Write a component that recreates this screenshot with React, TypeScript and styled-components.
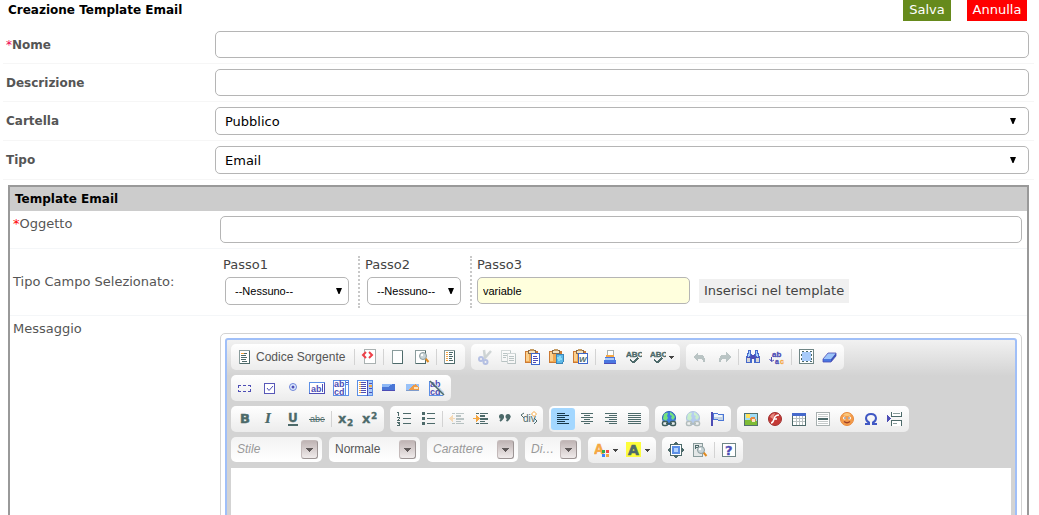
import React from "react";
import styled, { createGlobalStyle, css } from "styled-components";

const GlobalStyle = createGlobalStyle`
  *, *::before, *::after { box-sizing: border-box; }
  body { margin: 0; background: #fff; }
  button, input, select, textarea { margin: 0; font-family: inherit; }
`;

const ui = '"DejaVu Sans", Verdana, sans-serif';
const arial = '"Liberation Sans", Arial, sans-serif';

const Page = styled.main`
  height: 100vh;
  overflow: auto;
  scrollbar-width: none;
  font: 13px/16px ${ui};
  color: #555;
`;

const Form = styled.form`
  padding: 0 5px 0 3px;
`;

const Header = styled.header`
  display: flex;
  align-items: flex-start;
  justify-content: space-between;
  height: 26px;
  padding: 0 7px 0 5px;
`;

const Title = styled.h1`
  margin: 0;
  font: bold 12px/20px ${ui};
  color: #000;
`;

const Actions = styled.div`
  display: flex;
  gap: 16px;
`;

const ActionButton = styled.button<{ $color: string; $width: number }>`
  width: ${(p) => p.$width}px;
  height: 21px;
  padding: 0 0 2px;
  border: 0;
  background: ${(p) => p.$color};
  color: #fff;
  font: 13px/18px ${ui};
`;

const Row = styled.div`
  display: grid;
  grid-template-columns: 209px 1fr;
  align-items: center;
  padding: 5px 5px 5px 3px;
  border-bottom: 1px solid #f6f6f6;
`;

const RowLabel = styled.label`
  font: bold 12px/16px ${ui};
  color: #555;
`;

const Required = styled.span`
  font-weight: normal;
  color: #f00050;
`;

const controlShape = css`
  border: 1px solid #b5b5b5;
  border-radius: 5px;
  background: #fff;
  color: #000;
`;

const TextInput = styled.input<{ $small?: boolean }>`
  ${controlShape}
  display: block;
  width: 100%;
  height: 27px;
  padding: 0 5px;
  outline: 0;
  font: ${(p) => (p.$small ? `11px ${arial}` : `13px ${ui}`)};
  ${(p) => p.$small && "background: #ffffdd;"}
`;

const SelectWrap = styled.div<{ $small?: boolean }>`
  position: relative;
  svg {
    position: absolute;
    top: 11px;
    right: ${(p) => (p.$small ? 7 : 13)}px;
    pointer-events: none;
  }
`;

const SelectBox = styled.select<{ $small?: boolean }>`
  ${controlShape}
  display: block;
  appearance: none;
  width: 100%;
  height: 28px;
  padding: 0 9px;
  font: ${(p) => (p.$small ? `11px ${arial}` : `13px ${ui}`)};
`;

const Panel = styled.section`
  margin: 5px 5px 0;
  border: 2px solid #999;
`;

const PanelTitle = styled.h2`
  margin: 0;
  padding: 0 5px;
  background: #ccc;
  font: bold 12px/24px ${ui};
  color: #000;
`;

const PanelRow = styled.div<{ $top?: boolean }>`
  display: grid;
  grid-template-columns: 207px minmax(0, 1fr);
  align-items: ${(p) => (p.$top ? "start" : "center")};
  padding: 5px 5px 5px 3px;
  border-bottom: 1px solid #f4f6f8;
`;

const PanelLabel = styled.label`
  font: 13px/16px ${ui};
  color: #555;
`;

const RequiredRed = styled(Required)`
  color: #f00;
`;

const Steps = styled.div`
  display: flex;
  height: 56px;
  padding: 2px 0;
`;

const Step = styled.div<{ $pad: number; $width: number }>`
  width: ${(p) => p.$width}px;
  padding: 0 9px 0 ${(p) => p.$pad}px;
  & + & { border-left: 2px dotted #c8c8c8; }
`;

const StepTitle = styled.label<{ $flush?: boolean }>`
  display: block;
  height: 21px;
  margin-left: ${(p) => (p.$flush ? 0 : -2)}px;
  font: 13px/18px ${ui};
  color: #444;
`;

const Insert = styled.button`
  align-self: flex-start;
  height: 24px;
  margin-top: 23px;
  padding: 0 5px;
  border: 0;
  background: #f0f0f0;
  color: #444;
  font: 13px/24px ${ui};
`;

/* Editor */

const EditorShell = styled.div`
  margin-top: 12px;
  padding: 4px;
  border: 1px solid #d3d3d3;
  border-radius: 5px;
`;

const EditorFrame = styled.div`
  padding: 4px;
  border: 2px solid #a0bff8;
  border-radius: 3px;
  background: #d3d3d3 linear-gradient(#f1f1f1, #d3d3d3) no-repeat 0 0 / 100% 36px;
`;

const Tools = styled.div`
  display: flex;
  flex-direction: column;
  gap: 5px;
`;

const ToolRow = styled.div`
  display: flex;
  flex-wrap: wrap;
  gap: 6px;
`;

const Group = styled.div`
  display: flex;
  height: 26px;
  padding: 2px;
  border-radius: 5px;
  background: linear-gradient(#fff, #ececec);
`;

const ToolButton = styled.button<{ $active?: boolean; $faded?: boolean; $source?: boolean }>`
  display: flex;
  align-items: center;
  min-width: ${(p) => (p.$source ? 119 : 24)}px;
  height: 22px;
  padding: 0 4px;
  border: 0;
  border-radius: 3px;
  background: ${(p) => (p.$active ? "#a3d7ff" : "transparent")};
  color: #555;
  font: 12px/22px ${arial};
  svg { flex: none; opacity: ${(p) => (p.$faded ? 0.35 : 1)}; }
`;

const ToolText = styled.span`
  padding-left: 3px;
`;

const Separator = styled.span`
  width: 1px;
  height: 16px;
  margin: 3px 2px;
  background: #d3d3d3;
`;

const Combos = styled.div`
  display: flex;
  gap: 7px;
  margin-right: 1px;
`;

const Combo = styled.button<{ $width: number; $plain?: boolean }>`
  display: flex;
  align-items: center;
  justify-content: space-between;
  width: ${(p) => p.$width}px;
  height: 25px;
  padding: 0 4px 0 6px;
  border: 0;
  border-radius: 5px;
  background: linear-gradient(#f3f3f3, #fff);
  color: ${(p) => (p.$plain ? "#555" : "#999")};
  font: ${(p) => (p.$plain ? "normal" : "italic")} 12px/25px ${arial};
`;

const ComboArrow = styled.span`
  display: flex;
  align-items: center;
  justify-content: center;
  width: 17px;
  height: 19px;
  border: 1px solid #c4baba;
  border-right-color: #9c9494;
  border-bottom-color: #9c9494;
  border-radius: 3px;
  background: linear-gradient(#bfb4b4, #f0ebeb);
`;

const Writing = styled.textarea`
  display: block;
  width: 100%;
  height: 200px;
  margin-top: 5px;
  padding: 8px;
  border: 0;
  outline: 0;
  resize: none;
  background: #fff;
`;

/* Drawings, each on a 16 by 16 grid */

const T = "#4d6a6a";
const B = "#4d4db5";
const O = "#f5a742";

const Svg = ({ children }: { children: React.ReactNode }) => (
  <svg width="16" height="16" viewBox="0 0 16 16" fill="none" shapeRendering="crispEdges" aria-hidden="true">
    {children}
  </svg>
);

const Lines = ({ d, c = T, w = 1 }: { d: string; c?: string; w?: number }) => <path d={d} stroke={c} strokeWidth={w} />;
const Fill = ({ d, c = T }: { d: string; c?: string }) => <path d={d} fill={c} />;

const Letter = ({ x, y, size, c = T, font = "DejaVu Sans", italic, weight = "bold", edge = 0, children }: {
  x: number; y: number; size: number; c?: string; font?: string; italic?: boolean; weight?: string; edge?: number; children: React.ReactNode;
}) => (
  <text x={x} y={y} fontSize={size} fill={c} stroke={edge ? c : "none"} strokeWidth={edge} fontFamily={font} fontWeight={weight} fontStyle={italic ? "italic" : "normal"}>
    {children}
  </text>
);

const TwoLines = () => (
  <Letter x={1} y={7} size={9} c={B} font="Liberation Sans">
    ab<tspan x="1" y="15">cd</tspan>
  </Letter>
);

const Sheet = ({ x = 2, y = 1, w = 11, h = 14 }: { x?: number; y?: number; w?: number; h?: number }) => (
  <>
    <rect x={x + 0.5} y={y + 0.5} width={w - 1} height={h - 1} fill="#fff" stroke="#8a9c9c" />
    <Lines d={`M${x + w - 0.5} ${y + 1}V${y + h}M${x + 1} ${y + h - 0.5}H${x + w}`} />
  </>
);

const Clipboard = () => (
  <>
    <rect x="0" y="2" width="13" height="12" rx="1" fill="#cc7a33" />
    <rect x="1" y="3" width="8" height="10" fill="#f0a850" />
    <rect x="1" y="3" width="3" height="9" fill="#fbd08e" />
    <rect x="3" y="1" width="8" height="4" fill="#8a6a48" />
    <rect x="4" y="2" width="6" height="2" fill="#f3e3c0" />
    <rect x="5" y="0" width="4" height="2" fill="#c49a61" />
  </>
);

const Lens = ({ x, y }: { x: number; y: number }) => (
  <g shapeRendering="auto">
    <path d={`M${x + 2.5} ${y + 2.5}L${x + 5.5} ${y + 6}`} stroke="#e08a20" strokeWidth="2" />
    <circle cx={x} cy={y} r="3.5" fill="#c7d3d6" stroke="#8b9c9e" />
    <circle cx={x - 1} cy={y - 1} r="1.2" fill="#fff" />
  </g>
);

const Globe = () => (
  <g shapeRendering="auto">
    <circle cx="8" cy="7" r="6.5" fill="#3f7fe0" stroke="#2d62b0" />
    <path d="M3 3Q6 1 7 2L6 5L7 7L5 10L2 8ZM9 1Q13 3 14 6L12 9L10 7L11 5L9 4Z" fill="#74e27c" />
    <rect x="1.5" y="10.5" width="5" height="4" rx="1.5" fill="#e8eeee" stroke="#3e5c5c" strokeWidth="1.5" />
    <rect x="9.5" y="10.5" width="5" height="4" rx="1.5" fill="#e8eeee" stroke="#3e5c5c" strokeWidth="1.5" />
    <path d="M5 12.5H11" stroke="#3e5c5c" strokeWidth="1.5" />
  </g>
);

const spellParts = (
  <>
    <g shapeRendering="auto"><Letter x={0} y={8} size={8} edge={0.4} font="Liberation Sans">ABC</Letter></g>
    <path d="M4 10.500L7.500 13.500L12 9" stroke={T} strokeWidth="1.500" />
  </>
);

const undoParts = <Fill d="M1 8L6 3V6H10Q13 7 13 13H11Q11 10 9 10H6V13Z" />;

const icons: Record<string, React.ReactNode> = {
  source: <><Sheet /><Lines d="M4 6.500H9M4 8.500H10M4 10.500H9M5 12.500H10" /><Lines d="M4 4.500H7" c={O} /><Lines d="M7 4.500H10" /></>,
  tags: <><rect x="3.500" y="0.500" width="11" height="14" fill="#fff" stroke="#a9b1b1" /><path d="M5 3L2 6L5 9M8 3L11 6L8 9" stroke="#ee4048" strokeWidth="2" shapeRendering="auto" /></>,
  blank: <Sheet />,
  preview: <><Sheet x={1} /><Lens x={9} y={7} /></>,
  templates: <><Sheet x={1} /><Lines d="M3 3.500H5M3 5.500H5M3 7.500H5M3 9.500H5M3 11.500H5" c={O} /><Lines d="M6 3.500H10M6 5.500H9M6 7.500H10M6 9.500H9M6 11.500H10" /></>,
  cut: <g shapeRendering="auto"><path d="M7 1L8 9M14 2L7 10" stroke="#839494" strokeWidth="2.500" /><circle cx="4" cy="10" r="2" stroke="#4464c8" strokeWidth="2" /><circle cx="8.500" cy="13" r="2" stroke="#4464c8" strokeWidth="2" /></g>,
  copy: <><Sheet x={0} y={1} w={10} h={12} /><Lines d="M2 4.500H7M2 6.500H7M2 8.500H5" /><Sheet x={6} y={4} w={9} h={11} /><Lines d="M8 7.500H13M8 9.500H13M8 11.500H13" /></>,
  paste: <><Clipboard /><rect x="6.500" y="4.500" width="8" height="11" fill="#fff" stroke="#3e68cc" /><Lines d="M8 7.500H12M8 9.500H13M8 11.500H13M8 13.500H11" c={B} /></>,
  pasteText: <><Clipboard /><path d="M7 6L14 5L15 11L13 15L7 14Z" fill="#5eb9e8" stroke="#3b87b8" /><path d="M8 8L12 7L13 11L9 12Z" fill="#8bdcf5" /></>,
  pasteWord: <><Clipboard /><rect x="5.500" y="4.500" width="9" height="10" fill="#fff" stroke="#3e68cc" /><g shapeRendering="auto"><Letter x={6} y={13} size={8} italic font="Liberation Sans">W</Letter></g></>,
  print: <><rect x="5" y="1" width="6" height="6" fill="#fff" stroke="#a9b1b1" /><rect x="4" y="6" width="8" height="3" fill={O} /><path d="M3 8H13L14 14H2Z" fill="#4a76e0" /><path d="M3 9H12V11H3Z" fill="#a9cbfa" /><Lines d="M2 14.500H14" c={B} /></>,
  spell: spellParts,
  undo: undoParts,
  redo: <g transform="matrix(-1 0 0 1 16 0)">{undoParts}</g>,
  find: <><Fill d="M3 1h3v4h1v9h-6v-7h1v-3h1zM10 1h3v3h1v3h1v7h-6v-9h1z" c="#4669cb" /><Fill d="M4 2h1v5h-1zM11 2h1v5h-1zM3 5h1v3h-1zM12 5h1v3h-1z" c="#a6d0ff" /><Fill d="M2 9h3v4h-3zM11 9h3v4h-3z" c="#d5d5d5" /><Fill d="M6 6h4v4h-4z" c={B} /><Lines d="M2 8.500H14" c={B} /></>,
  replace: (
    <g shapeRendering="auto">
      <Letter x={3} y={8} size={8} c={B} edge={0.3} font="Liberation Sans">ab</Letter>
      <Letter x={6} y={15} size={7} c={B} edge={0.3} font="Liberation Sans">a</Letter>
      <Letter x={11} y={15} size={7} c={O} edge={0.3} font="Liberation Sans">c</Letter>
      <path d="M2.500 8V12M0.500 10L2.500 12.500L5 11" stroke={B} />
    </g>
  ),
  selectAll: <><rect x="1.500" y="0.500" width="14" height="14" fill="#fff" stroke="#6f8585" /><rect x="4" y="3" width="9" height="9" fill="#a9cbfa" /><rect x="3.500" y="2.500" width="10" height="10" stroke={T} strokeDasharray="2 2" /></>,
  eraser: <g shapeRendering="auto"><path d="M1 10L6 4H14L9 10Z" fill="#9cc4fa" /><path d="M1 10H9V13H1Z" fill="#4a76e0" /><path d="M9 10L14 4V7L9 13Z" fill="#3653b8" /><path d="M1 10L6 4H14V7L9 13H1Z" stroke={B} strokeWidth=".8" /></g>,
  form: <><Lines d="M1 5.500H4M6 5.500H9M11 5.500H14M1 11.500H4M6 11.500H9M11 11.500H14" c={B} /><Lines d="M1.500 5V8M1.500 10V12M13.500 5V7M13.500 9V12" c={B} /></>,
  checkbox: <><rect x="3.500" y="3.500" width="10" height="10" fill="#fff" stroke="#5858b8" /><path d="M6 8L8 10.500L12 6" stroke={B} shapeRendering="auto" /></>,
  radio: <g shapeRendering="auto"><circle cx="8" cy="7" r="3.500" fill="#dfecff" stroke="#6f85d8" /><circle cx="8" cy="7" r="1.500" fill={B} /></g>,
  textField: <><rect x="0.500" y="2.500" width="15" height="11" fill="#fff" stroke="#5c8fe6" /><Lines d="M0 13.500H16M15.500 3V14" c={B} /><g shapeRendering="auto"><Letter x={2} y={12} size={9} c={B} font="Liberation Sans">ab</Letter></g><Lines d="M13.500 4V12" c={B} /></>,
  textArea: <><rect x="0.500" y="0.500" width="15" height="15" fill="#fff" stroke="#5c8fe6" /><g shapeRendering="auto"><TwoLines /></g><Lines d="M12.500 0V16M13 4.500H16" c="#5c8fe6" /><Fill d="M13 2h2v1h-2z" c={B} /></>,
  selectField: <><rect x="0.500" y="0.500" width="15" height="15" fill="#fff" stroke="#5c8fe6" /><Lines d="M2 2.500H4M2 4.500H4M2 6.500H4M2 8.500H4M2 10.500H4M2 12.500H4" c={O} /><Lines d="M4 2.500H9M4 4.500H9M4 6.500H9M4 8.500H9M4 10.500H9M4 12.500H9" c={B} /><rect x="11" y="1" width="4" height="14" fill="#a9cbfa" /><Lines d="M10.500 0V16M12 3.500H15M12 8.500H15M12 12.500H15" c={B} /><Fill d="M12 5h3v2h-3z" c={O} /></>,
  button: <><rect x="1" y="4" width="13" height="7" fill="#4a76d6" /><path d="M1 4H12L7 7H1Z" fill="#8cb7f5" /><Lines d="M1 10.500H14" c={B} /></>,
  imageButton: <><rect x="1" y="4" width="13" height="7" fill="#9ac2f7" /><path d="M4 9L8 5L11 4L14 8V11H4Z" fill="#ef9a46" /><path d="M9 7H13V9H9Z" fill="#fce4bc" /><Lines d="M1 10.500H14" c="#7f9ccc" /></>,
  hidden: <><g shapeRendering="auto"><TwoLines /><path d="M3 1L15 12V15Z" fill="#bfd6ee" /></g><Lines d="M0.500 1V15M0 15.500H14" c="#5c8fe6" /><path d="M1 1L15 15" stroke={T} strokeWidth="1.500" shapeRendering="auto" /></>,
  bold: <g shapeRendering="auto"><Letter x={3} y={12} size={13} edge={0.5}>B</Letter></g>,
  italic: <g shapeRendering="auto"><Letter x={4} y={12} size={13} italic font="DejaVu Serif">I</Letter></g>,
  underline: <><g shapeRendering="auto"><Letter x={3} y={11} size={12} edge={0.3}>U</Letter></g><Lines d="M3 14H13" w={2} /></>,
  strike: <><g shapeRendering="auto"><Letter x={1} y={11} size={9} weight="normal" font="Liberation Sans">abc</Letter></g><Lines d="M0 8.500H16" /></>,
  sub: <g shapeRendering="auto"><Letter x={0} y={12} size={13} edge={0.3}>x<tspan x="9" y="15" fontSize="9">2</tspan></Letter></g>,
  sup: <g shapeRendering="auto"><Letter x={0} y={12} size={13} edge={0.3}>x<tspan x="9" y="8" fontSize="9">2</tspan></Letter></g>,
  numbered: <Lines d="M7 2.500H15M7 7.500H15M7 12.500H15M1 1.500H3M2.500 1V5M1 6.500H4M3 7.500H4M2 8.500H3M1 9.500H4M1 11.500H4M3.500 11V15M2 12.500H4M1 14.500H4" />,
  bullets: <><Lines d="M7 2.500H15M7 7.500H15M7 12.500H15" /><Fill d="M2 1h3v3h-3zM2 6h3v3h-3zM2 11h3v3h-3z" /></>,
  outdent: <><Lines d="M3 2.500H6M7 2.500H15M7 10.500H12M3 12.500H6M7 12.500H15" /><Lines d="M7 5H12M7 8H15" w={2} /><Fill d="M0 7h1v-1h1v-1h1v-1h1v3h2v1h-2v3h-1v-1h-1v-1h-1v-1h-1z" c={O} /></>,
  indent: <><Lines d="M3 2.500H6M7 2.500H15M7 10.500H12M3 12.500H6M7 12.500H15" /><Lines d="M7 5H12M7 8H15" w={2} /><Fill d="M0 7h3v-3h1v1h1v1h1v1h1v1h-1v1h-1v1h-1v1h-1v-3h-3z" c={O} /></>,
  quote: <g shapeRendering="auto"><path d="M3 10Q6 8 6 5" stroke={T} strokeWidth="2" /><circle cx="4.500" cy="5.500" r="2.500" fill={T} /><path d="M9.500 10Q12.500 8 12.500 5" stroke={T} strokeWidth="2" /><circle cx="11" cy="5.500" r="2.500" fill={T} /></g>,
  div: <g shapeRendering="auto"><Letter x={2} y={11} size={10} weight="normal" font="Liberation Sans">div</Letter><path d="M3 2L0 4L3 7M13 7L16 10L13 13" stroke={T} /><path d="M13 0.500L15.500 3L13 5.500L10.500 3Z" fill="#fff" stroke={O} /></g>,
  left: <Lines c="#16384a" d="M2 2.500H10M2 4.500H14M2 6.500H10M2 8.500H14M2 10.500H10M2 12.500H14" />,
  center: <Lines d="M2 2.500H14M5 4.500H11M2 6.500H14M5 8.500H11M2 10.500H14M5 12.500H11" />,
  right: <Lines d="M2 2.500H14M6 4.500H14M2 6.500H14M6 8.500H14M2 10.500H14M6 12.500H14" />,
  justify: <Lines d="M1 2.500H14M1 4.500H14M1 6.500H14M1 8.500H14M1 10.500H14M1 12.500H14" />,
  link: <Globe />,
  unlink: <Globe />,
  anchor: <><Lines d="M3 1V15" c={B} w={2} /><path d="M4 2H8L9 3H14V9H9L8 8H4Z" fill="#c3d3e4" stroke="#4a76d6" /><Fill d="M5 3h4v1h4v2h-8z" c="#edf4fb" /></>,
  image: <><rect x="1.500" y="2.500" width="13" height="12" fill="#9fdcf7" stroke="#52706c" /><path d="M2 9H8L14 10V14H2Z" fill="#7ebc36" /><circle cx="5" cy="5" r="2.500" fill="#ffe35a" /><path d="M7 9L8 6H12L13 10H8Z" fill="#e88a45" /><rect x="9" y="8" width="3" height="3" fill="#fce8c8" /></>,
  flash: <g shapeRendering="auto"><circle cx="8" cy="8" r="6.500" fill="#c53a36" stroke="#9f302f" /><path d="M3 6Q4 3 8 2L6 8Z" fill="#e88980" /><path d="M12 4Q8 4 7 8Q6 12 4 12M7 8H10" stroke="#fff" strokeWidth="1.500" /></g>,
  table: <><rect x="1.500" y="2.500" width="13" height="12" fill="#fff" stroke={T} /><Fill d="M1 2h14v3h-14z" c="#4669cb" /><Lines d="M2 7.500H14M2 10.500H14M5.500 5V14M8.500 5V14M11.500 5V14" c="#b9c1c1" /></>,
  rule: <><rect x="1.500" y="1.500" width="13" height="13" fill="#fff" stroke="#a9b1b1" /><Lines d="M3 3.500H13M3 5.500H13M3 10.500H13M3 12.500H13" c="#c5caca" /><Fill d="M3 7h10v2h-10z" /></>,
  smiley: <g shapeRendering="auto"><circle cx="8" cy="8" r="6.500" fill="#f49c4b" stroke="#e88a3c" /><path d="M4 4Q8 0 12 4Q8 6 4 4" fill="#fac77c" /><circle cx="5.500" cy="7" r="1.500" fill="#fff" /><circle cx="10.500" cy="7" r="1.500" fill="#fff" /><circle cx="6" cy="7" r=".7" fill="#334" /><circle cx="10" cy="7" r=".7" fill="#334" /><path d="M5 10.500Q8 13 11 10.500" stroke="#9e4128" strokeWidth="1.500" /></g>,
  omega: <g shapeRendering="auto"><path d="M2 13H6V11.500Q3 10 3 7Q3.500 3 8 3Q12.500 3 13 7Q13 10 10 11.500V13H14" stroke="#4058c4" strokeWidth="2" /></g>,
  pageBreak: <><Fill d="M0 4h1v1h1v1h1v1h1v1h-1v1h-1v1h-1v1h-1z" c={B} /><path d="M4.500 1V5.500H14.500V1M4.500 15V9.500H14.500V15" fill="#fff" stroke={T} /><Lines d="M6 2.500H13M6 12.500H10" c="#8a9c9c" /></>,
  textColor: <><g shapeRendering="auto"><Letter x={0} y={12} size={14} c={O} edge={0.6} font="Liberation Sans">A</Letter></g><Fill d="M8 8h3v3h-3z" c="#35ad4b" /><Fill d="M12 8h3v3h-3z" c="#f04a4d" /><Fill d="M8 12h3v3h-3z" c="#3d83ff" /><Fill d="M12 12h3v3h-3z" c={O} /></>,
  background: <><rect x="0" y="0" width="15" height="15" fill="#fdfd3c" /><g shapeRendering="auto"><Letter x={2} y={13} size={14} edge={0.6}>A</Letter></g></>,
  maximize: <><rect x="2.500" y="2.500" width="11" height="11" fill="#fff" stroke={T} /><rect x="4" y="4" width="8" height="8" fill="#5c8fe6" /><rect x="6" y="6" width="4" height="4" fill="#b2d3ff" /><Fill d="M7 0h2v1h1v1h-4v-1h1zM7 16h2v-1h1v-1h-4v1h1zM0 7h1v-1h1v4h-1v-1h-1zM16 7h-1v-1h-1v4h1v-1h1z" /></>,
  blocks: <><rect x="1.500" y="1.500" width="9" height="13" fill="#e3e7e7" stroke="#8a9c9c" /><Lines d="M3 3.500H6M3.500 3V7M6.500 3V7M3 5.500H7" /><Lens x={9} y={8} /></>,
  about: <><rect x="1.500" y="1.500" width="13" height="13" fill="#fff" stroke="#6f8585" /><g shapeRendering="auto"><Letter x={4} y={13} size={13} c={B} edge={0.3}>?</Letter></g></>,
};

const Arrow = () => (
  <svg width="5" height="3" viewBox="0 0 5 3" fill="#444" shapeRendering="crispEdges" aria-hidden="true">
    <path d="M0 0H5V1H4V2H3V3H2V2H1V1H0Z" />
  </svg>
);

const WideArrow = () => (
  <svg width="7" height="4" viewBox="0 0 7 4" fill="#5e5858" shapeRendering="crispEdges" aria-hidden="true">
    <path d="M0 0H7V1H6V2H5V3H4V4H3V3H2V2H1V1H0Z" />
  </svg>
);

const SelectArrow = () => (
  <svg width="6" height="6" viewBox="0 0 6 6" fill="#000" aria-hidden="true">
    <path d="M0 0H6L3.500 6H2.500Z" />
  </svg>
);

type ToolItem = { icon: string; text?: string; faded?: boolean; active?: boolean; menu?: boolean };
type ToolDef = string | ToolItem;
const faded = (icon: string): ToolDef => ({ icon, faded: true });

const DropButton = styled(ToolButton)`
  width: 32px;
  gap: 3px;
  padding-right: 0;
`;

const Tool = ({ def }: { def: ToolDef }) => {
  if (def === "|") return <Separator />;
  const item: ToolItem = typeof def === "string" ? { icon: def } : def;
  const Base = item.menu ? DropButton : ToolButton;
  return (
    <Base type="button" aria-label={item.text || item.icon} $faded={item.faded} $active={item.active} $source={!!item.text}>
      <Svg>{icons[item.icon]}</Svg>
      {item.text && <ToolText>{item.text}</ToolText>}
      {item.menu && <Arrow />}
    </Base>
  );
};

const ToolGroup = ({ items }: { items: ToolDef[] }) => (
  <Group>{items.map((def, i) => <Tool key={i} def={def} />)}</Group>
);

const rows: ToolDef[][][] = [
  [
    [{ icon: "source", text: "Codice Sorgente" }, "|", "tags", "|", "blank", "preview", "|", "templates"],
    [faded("cut"), faded("copy"), "paste", "pasteText", "pasteWord", "|", "print", "spell", { icon: "spell", menu: true }],
    [faded("undo"), faded("redo"), "|", "find", "replace", "|", "selectAll", "eraser"],
  ],
  [["form", "checkbox", "radio", "textField", "textArea", "selectField", "button", "imageButton", "hidden"]],
  [
    ["bold", "italic", "underline", "strike", "|", "sub", "sup"],
    ["numbered", "bullets", "|", faded("outdent"), "indent", "quote", "div"],
    [{ icon: "left", active: true }, "center", "right", "justify"],
    ["link", faded("unlink"), "anchor"],
    ["image", "flash", "table", "rule", "smiley", "omega", "pageBreak"],
  ],
];

const combos = [
  { text: "Stile", width: 91 },
  { text: "Normale", width: 91, plain: true },
  { text: "Carattere", width: 91 },
  { text: "Di…", width: 56 },
];

const Select = ({ id, value, small }: { id: string; value: string; small?: boolean }) => (
  <SelectWrap $small={small}>
    <SelectBox id={id} $small={small} defaultValue={value}>
      <option>{value}</option>
    </SelectBox>
    <SelectArrow />
  </SelectWrap>
);

export default function App() {
  return (
    <Page>
      <GlobalStyle />
      <Form onSubmit={(e) => e.preventDefault()}>
        <Header>
          <Title>Creazione Template Email</Title>
          <Actions>
            <ActionButton $color="#668a1c" $width={48}>Salva</ActionButton>
            <ActionButton type="button" $color="#ff0000" $width={60}>Annulla</ActionButton>
          </Actions>
        </Header>
        <Row>
          <RowLabel htmlFor="nome"><Required>*</Required>Nome</RowLabel>
          <TextInput id="nome" />
        </Row>
        <Row>
          <RowLabel htmlFor="descrizione">Descrizione</RowLabel>
          <TextInput id="descrizione" />
        </Row>
        <Row>
          <RowLabel htmlFor="cartella">Cartella</RowLabel>
          <Select id="cartella" value="Pubblico" />
        </Row>
        <Row>
          <RowLabel htmlFor="tipo">Tipo</RowLabel>
          <Select id="tipo" value="Email" />
        </Row>
        <Panel>
          <PanelTitle>Template Email</PanelTitle>
          <PanelRow $top>
            <PanelLabel htmlFor="oggetto"><RequiredRed>*</RequiredRed>Oggetto</PanelLabel>
            <TextInput id="oggetto" />
          </PanelRow>
          <PanelRow>
            <PanelLabel htmlFor="passo1">Tipo Campo Selezionato:</PanelLabel>
            <Steps>
              <Step $pad={5} $width={138}>
                <StepTitle htmlFor="passo1">Passo1</StepTitle>
                <Select id="passo1" value="--Nessuno--" small />
              </Step>
              <Step $pad={7} $width={112}>
                <StepTitle htmlFor="passo2">Passo2</StepTitle>
                <Select id="passo2" value="--Nessuno--" small />
              </Step>
              <Step $pad={5} $width={229}>
                <StepTitle htmlFor="passo3" $flush>Passo3</StepTitle>
                <TextInput id="passo3" $small defaultValue="variable" />
              </Step>
              <Insert type="button">Inserisci nel template</Insert>
            </Steps>
          </PanelRow>
          <PanelRow $top>
            <PanelLabel htmlFor="messaggio">Messaggio</PanelLabel>
            <EditorShell>
              <EditorFrame>
                <Tools>
                  {rows.map((groups, r) => (
                    <ToolRow key={r}>
                      {groups.map((items, g) => <ToolGroup key={g} items={items} />)}
                    </ToolRow>
                  ))}
                  <ToolRow>
                    <Combos>
                      {combos.map((c) => (
                        <Combo key={c.text} type="button" $width={c.width} $plain={c.plain}>
                          {c.text}
                          <ComboArrow><WideArrow /></ComboArrow>
                        </Combo>
                      ))}
                    </Combos>
                    <ToolGroup items={[{ icon: "textColor", menu: true }, { icon: "background", menu: true }]} />
                    <ToolGroup items={["maximize", "blocks", "|", "about"]} />
                  </ToolRow>
                </Tools>
                <Writing id="messaggio" />
              </EditorFrame>
            </EditorShell>
          </PanelRow>
        </Panel>
      </Form>
    </Page>
  );
}
